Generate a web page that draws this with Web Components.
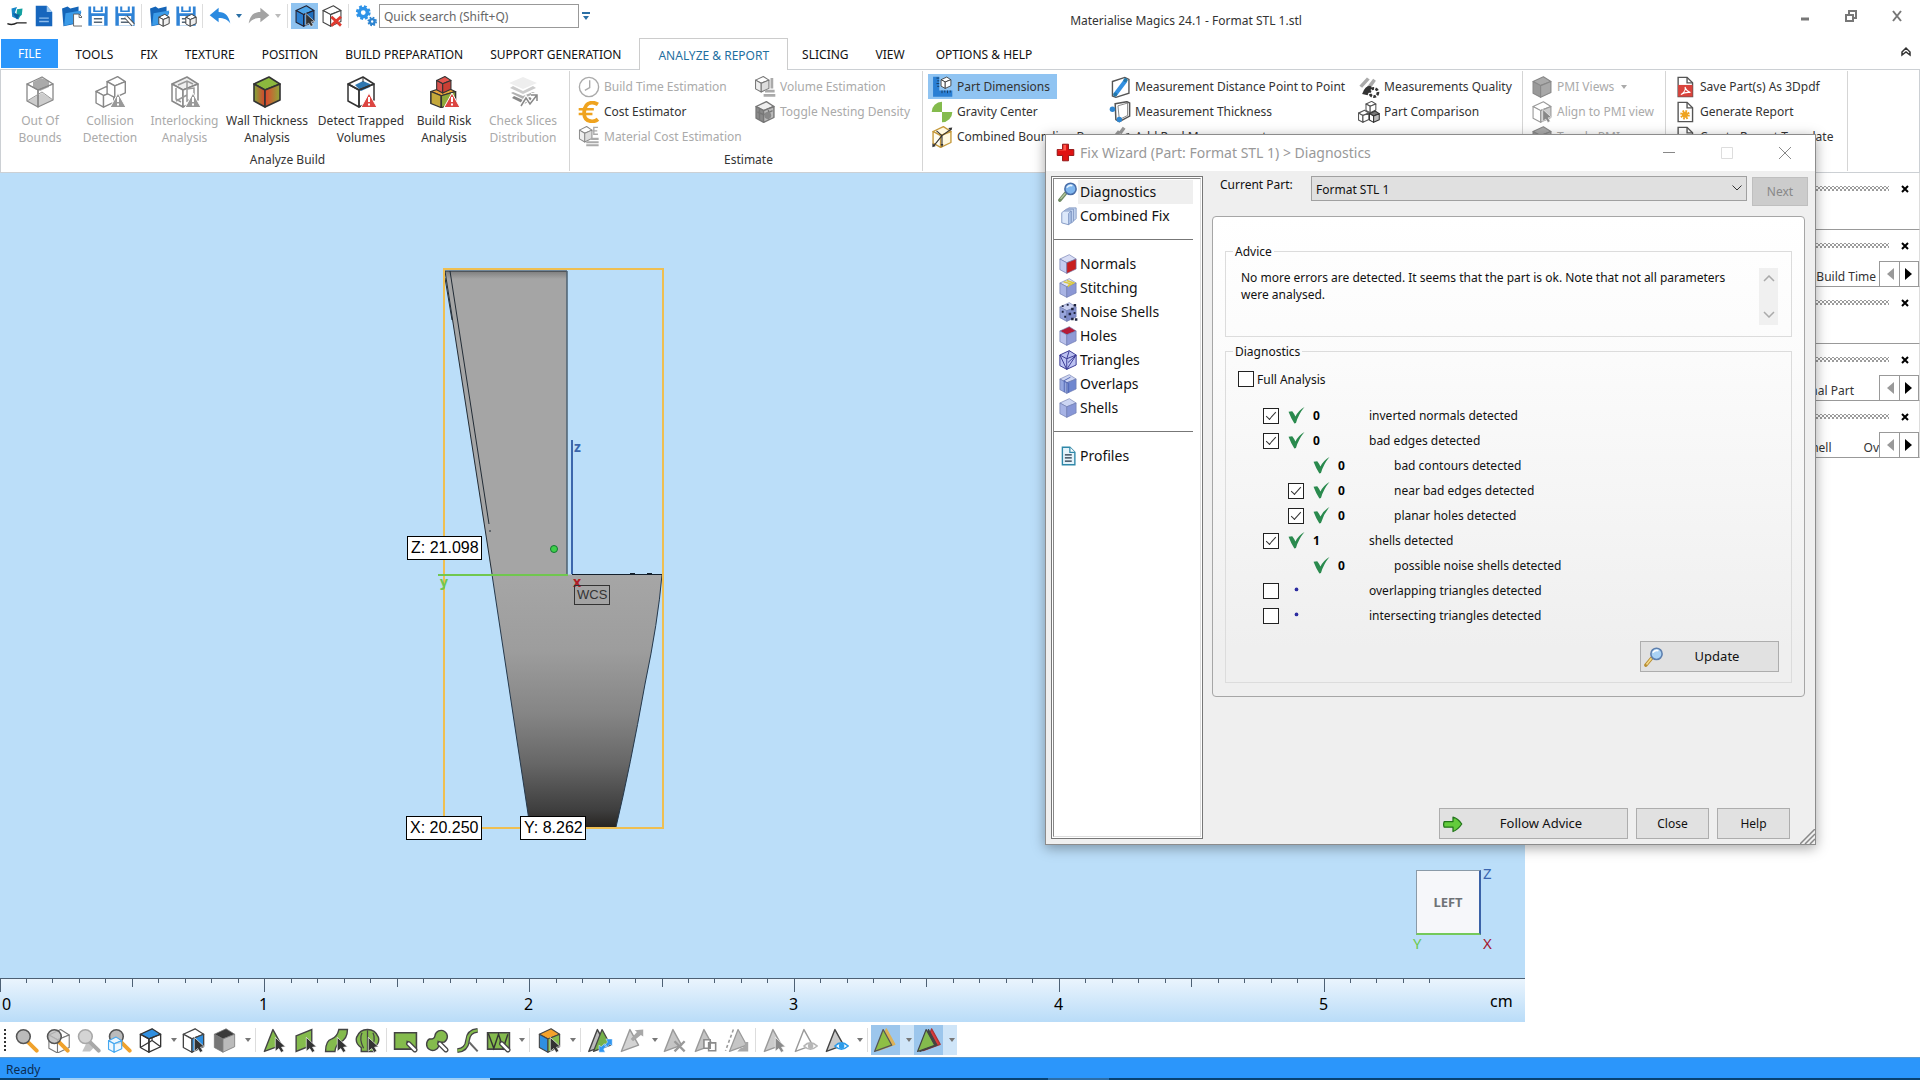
<!DOCTYPE html>
<html lang="en">
<head>
<meta charset="utf-8">
<title>Materialise Magics 24.1 - Format STL 1.stl</title>
<style>
  html, body { margin: 0; height: 100%; }
  body { font: 12px/17px "Noto Sans", "Open Sans", sans-serif; color: #222; background: #fff; overflow: hidden; }
</style>
</head>
<body>
<mg-app></mg-app>
<script>
/* ---------- icon drawing helpers, all on a 32-unit grid ---------- */
const cube = (t, l, r, s = '#444', w = 1.6, tf = '') =>
  `<g transform="${tf}" stroke="${s}" stroke-width="${w}" stroke-linejoin="round"><path fill="${t}" d="M18 1L3 8l11 6 15-6z"/><path fill="${l}" d="M3 8v17l11 6V14z"/><path fill="${r}" d="M14 14v17l15-7V8z"/></g>`;
const warn = c => `<path fill="${c}" stroke="#fff" d="M24 17l8 14.500H16z"/><path d="M24 21v5m0 1.500v2" stroke="#fff" stroke-width="2"/>`;
const cursor = (c = '#333') => `<path fill="${c}" stroke="#fff" stroke-width=".8" d="M17 12l13 12-5 .5 3 5-3.500 1.800-3-5-4.500 3.500z"/>`;
const pencil = (c = '#fff', e = '#444') => `<path d="M20 20l8 8" stroke="${e}" stroke-width="6.500" stroke-linecap="round"/><path d="M20 20l8 8" stroke="${c}" stroke-width="3.500" stroke-linecap="round"/><path d="M17 16l4 1-3 3z" fill="${e}"/>`;
const tri = (f, s = '#444', w = 1.800, tf = '') => `<path transform="${tf}" d="M14 2L3 30l22-8z" fill="${f}" stroke="${s}" stroke-width="${w}" stroke-linejoin="round"/>`;
const eye = (c) => `<path d="M14 23q8-8 17 0-9 8-17 0z" fill="#fff" stroke="${c}" stroke-width="2"/><circle cx="22.500" cy="23" r="3.500" fill="${c}"/>`;
const floppy = `<path fill="#2f83d6" d="M2 2h4v10h20V2h4v28H2z"/><path fill="#2f83d6" d="M9 2h3v6h8V2h3v8H9z"/><path fill="#fff" d="M7 16h18v14H7z"/><path stroke="#567" stroke-width="2" d="M10 20h12M10 25h12"/>`;
const folder = `<path fill="#1565b8" d="M3 5l8-3 4 3 12-3v7l4 1-6 17-20 4z"/><path fill="#3b9be8" d="M8 12l23-4-5 17-20 5z"/>`;
const page = (s = '#555') => `<path d="M6 2h13l8 8v20H6z" fill="#fff" stroke="${s}" stroke-width="2"/><path d="M19 2v8h8" fill="none" stroke="${s}" stroke-width="2"/>`;
const mag = (g, h, o = '#555') => `<path d="M18 18l11 11" stroke="${h}" stroke-width="5" stroke-linecap="round"/><circle cx="12" cy="11" r="8.800" fill="${g}" stroke="${o}" stroke-width="2"/>`;
const lilac = (t, l, r) => cube(t, l, r, '#6b78ad', 1);
const clay = '#888';
const arrow = c => `<path fill="${c}" d="M1 15L14 4v6c10 0 15 6 17 17-4-6-9-8-17-8v6z"/>`;
const stack = `<path fill="#eee" d="M16 1l14 6-14 6L2 7z"/><path fill="#ccc" d="M3 12l13 6 13-6-3-2-10 5-10-5z"/><path fill="#b0b0b0" d="M4 17l12 6 12-6-2-1-10 4-10-4z"/><path fill="#888" d="M5 22l12 6 9-4-3-3-7 3-9-4z"/>`;
const ICONS = {
  logo: `<path fill="#1787c9" d="M8 5l8-2-3 8 7 6-2 4-9-4z"/><path fill="#12a0a0" d="M16 6l8-1-1 9-6 6-2-6z"/><path fill="#0d5f9f" d="M10 12l6 9 4-7z"/><path d="M2 27q7 3 14-1h14" stroke="#222" stroke-width="2" fill="none"/>`,
  newdoc: `<path fill="#1766bd" d="M4 1h16l8 9v21H4z"/><path fill="#9cc9f2" d="M20 1l8 9h-8z"/><path stroke="#8fbdec" stroke-width="2" d="M9 19h14M9 24h14"/>`,
  open: folder + `<g transform="translate(16 12) scale(.62)">${page()}</g>`,
  save: floppy,
  saveas: floppy + `<path d="M17 17l11 12" stroke="#555" stroke-width="6"/><path d="M17 17l11 12" stroke="#fff" stroke-width="3"/>`,
  openpart: folder + cube('#fff', '#fff', '#eee', '#444', 2.500, 'translate(14 13) scale(.58)'),
  savepart: floppy + cube('#fff', '#fff', '#eee', '#444', 2.500, 'translate(14 13) scale(.58)'),
  undo: arrow('#2b8ae0'),
  redo: `<g transform="matrix(-1 0 0 1 32 0)">${arrow('#a3a3a3')}</g>`,
  selcube: cube('#4ea6ea', '#2b7fd0', '#1f6fbe', '#223', 1.600) + cursor(),
  delcube: cube('#fff', '#fff', '#fff') + `<path d="M15 17l14 13M29 17L15 30" stroke="#e03a2f" stroke-width="4"/>`,
  gears: `<circle cx="12" cy="11" r="6" fill="none" stroke="#2e93e8" stroke-width="5"/><circle cx="12" cy="11" r="9" fill="none" stroke="#2e93e8" stroke-width="3.500" stroke-dasharray="4 3.070"/><circle cx="25" cy="24" r="3.500" fill="none" stroke="#2e84d0" stroke-width="3.500"/><circle cx="25" cy="24" r="5.800" fill="none" stroke="#2e84d0" stroke-width="2.400" stroke-dasharray="2.500 2.060"/>`,
  bounds: `<path d="M9 6l8-4 8 3v6l-9 4-7-4z" fill="#aaa"/><path d="M3 25l15-8 11 7-15 7z" fill="#ccc"/>` + cube('none', 'none', 'none', '#888', 1.300) + `<path d="M3 25l15-9 11 8" fill="none" stroke="#999"/>`,
  collision: cube('#fff', '#fff', '#fff', clay, 2, 'translate(0 10) scale(.68)') + cube('#fff', '#fff', '#fff', clay, 2, 'translate(11 0) scale(.7)') + warn('#999'),
  interlock: cube('#eee', '#fff', '#fff', clay, 1.500) + `<path d="M18 5v10M7 12v11l5 3M18 13v12l7-3V12zM9 9l9-4 6 3M7 25l11-6" fill="none" stroke="#999" stroke-width="1.500"/>` + warn('#999'),
  wall: `<defs><linearGradient id="w"><stop offset="0" stop-color="#80a83a"/><stop offset="1" stop-color="#d8432c"/></linearGradient><linearGradient id="v"><stop offset="0" stop-color="#e0452e"/><stop offset="1" stop-color="#8fa83a"/></linearGradient></defs>` + cube('#8cb83e', 'url(#w)', 'url(#v)', '#333'),
  trapped: `<path d="M10 9l8-4 7 3v3l-9 4z" fill="#2f77b0"/>` + cube('none', 'none', 'none', '#333', 1.500) + `<path d="M18 1v5" stroke="#333"/>` + warn('#dc4541'),
  risk: cube('#e8a33c', '#c4a83b', '#90a93a', '#333', 1.600, 'translate(0 10) scale(.95 .7)') + cube('#e4554e', '#d8504c', '#cb3f34', '#333', 2, 'translate(7 0) scale(.55)') + warn('#dc4541'),
  slices: stack + `<path d="M14 30l5-8 4 6 7-9m-6 0h6v6" fill="none" stroke="#fff" stroke-width="4"/><path d="M14 30l5-8 4 6 7-9m-6 0h6v6" fill="none" stroke="#888" stroke-width="1.500"/>`,
  clock: `<circle cx="16" cy="16" r="14" fill="#fff" stroke="#aaa" stroke-width="2"/><path d="M17 6v11l-7 4" fill="none" stroke="#aaa" stroke-width="2"/>`,
  euro: `<path d="M29 5Q24 2 20 2.500 10 3 9 16t11 13.500q5 .5 9-3" fill="none" stroke="#efa31f" stroke-width="5.500"/><path d="M1 12h22M1 19h20" stroke="#efa31f" stroke-width="3.500"/>`,
  matcost: cube('#fff', '#eee', '#ddd', '#888', 2, 'scale(.7 .75)') + `<path fill="#aaa" d="M12 22h18v3H12zM12 26.500h18v3H12zM19 17h11v3.500H19z"/><path d="M29 2h-6v10h6M21 7h7" stroke="#aaa" stroke-width="2" fill="none"/>`,
  volume: cube('#fff', '#eee', '#ddd', '#777', 2, 'scale(.75)') + `<path fill="#aaa" d="M16 20h14v4H16zM14 26h17v4H14zM24 3h4v15h-4z"/>`,
  nest: cube('#eee', '#8a8a8a', '#bbb', '#777', 2) + `<path d="M5 16l9 4 13-6M8 12v15M21 13v14" stroke="#777" stroke-width="2" fill="none"/><circle cx="20" cy="21" r="5" fill="#888"/>`,
  dims: `<path fill="#2a7fd4" d="M3 1h9v20h19v9H3z"/><path d="M12 3h-4M12 7H9M12 11H8M12 15H9M16 21v4M20 21v3M24 21v4M28 21v3" stroke="#123" stroke-width="1"/>` + cube('#fff', '#fff', '#fff', '#333', 2.200, 'translate(13 1) scale(.55)'),
  gravity: `<path fill="#84bb4d" d="M16 1v15H1A15 15 0 0116 1zM16 31V16h15a15 15 0 01-15 15z"/>` ,
  bbox: cube('#fff8e0', '#fffdf2', '#fff8e0', '#c5993c', 2) + `<path d="M4 29L16 14m0 0L8 7m8 7l14-10M16 14v14" stroke="#333" stroke-width="1.600" fill="none"/><path fill="#333" d="M2 31v-6l5 4zM31 2l-6 1 4 4zM14 26h4l-2 5z"/>`,
  dist: `<path d="M5 8l18-6 6 3v20L10 31l-5-2z" fill="#fff" stroke="#555" stroke-width="2"/><path d="M9 27L24 7" stroke="#3390e0" stroke-width="6"/><circle cx="9" cy="27" r="3" fill="#27a"/><circle cx="24" cy="6" r="3" fill="#27a"/>`,
  thick: `<path d="M9 4l17-3 4 2v19L15 30l-5-3z" fill="#fff" stroke="#555" stroke-width="2.200"/><path d="M13 7l14-4v18l-12 6z" fill="none" stroke="#555"/><circle cx="5" cy="12" r="4" fill="#2f86d0"/><circle cx="15" cy="27" r="4" fill="#2f86d0"/>`,
  measure: `<path fill="#999" d="M2 20L13 6l4 3-9 14zM14 9l6-8 4 3-6 8z"/><path fill="#444" d="M17 20q4-10 12-10l2 4q-7 0-8 9z"/>`,
  quality: `<path fill="#aaa" d="M2 14L13 2l4 3L6 17zM12 17L22 4l4 3-9 13z"/><path fill="#333" d="M6 26q4-12 12-12l6 9q-8-3-10 5z"/><circle cx="23" cy="24" r="6" fill="#fff" stroke="#333" stroke-width="4" stroke-dasharray="4 2"/>`,
  compare: cube('#fff', '#fff', '#fff', '#555', 2.800, 'translate(10 0) scale(.55)') + cube('#fff', '#fff', '#fff', '#555', 2.800, 'translate(-1 13) scale(.58)') + cube('#777', '#fff', '#bbb', '#333', 2.800, 'translate(15 14) scale(.55)'),
  pmi: cube('#aaa', '#999', '#a8a8a8', '#888'),
  align: cube('#fff', '#fff', '#ccc', '#999') + cursor('#888'),
  pdf: page() + `<path fill="#d9433c" d="M6 13h21v17H6z"/><path d="M10 27q8-5 6-11 2 6 8 8-8-1-14 3z" fill="none" stroke="#fff" stroke-width="1.500"/>`,
  report: page() + `<circle cx="16" cy="20" r="4.500" fill="#efa31f"/><circle cx="16" cy="20" r="5.500" fill="none" stroke="#efa31f" stroke-width="3" stroke-dasharray="2.500 1.800"/>`,
  template: page() + `<path stroke="#777" stroke-width="2" d="M10 15h12M10 20h12"/>`,
  plus: `<path fill="#e01212" stroke="#8a0d0d" stroke-width="1.500" d="M11 2h10v9h9v10h-9v9H11v-9H2V11h9z"/><path fill="#ff5a4e" d="M12.500 3.500H17v9H4v-1h8.500z"/>`,
  lens: `<path d="M3 29l10-12" stroke="#6f8a62" stroke-width="5.500" stroke-linecap="round"/><path d="M4 27l8-9" stroke="#b9c9a4" stroke-width="2"/><circle cx="20" cy="11" r="9" fill="#7fb6ee" stroke="#4a6ea8" stroke-width="2.500"/><path d="M14 9q4-5 9-3" stroke="#e8f4ff" stroke-width="2.500" fill="none"/>`,
  lensgold: `<path d="M3 29l10-12" stroke="#b98f33" stroke-width="5.500" stroke-linecap="round"/><path d="M4 28l8-10" stroke="#f5d98a" stroke-width="2.500"/><circle cx="20" cy="11" r="9" fill="#a9d2f5" stroke="#5d7fae" stroke-width="2.500"/><path d="M14 9q4-5 9-3" stroke="#fff" stroke-width="2.500" fill="none"/>`,
  combined: `<g stroke="#7c92bf" stroke-width="1.400"><path fill="#c9d9f2" d="M14 6l3-3h12v17l-3 3H14z"/><path fill="#c0d2ef" d="M10 8l3-3h12v19l-3 3H10z"/><path fill="#dce8fa" d="M6 11l3-3h12v18l-4 4-11-3z"/><path fill="#b3c8ec" d="M17 30V12l4-4v18z"/></g>`,
  normals: lilac('#d8ddf5', '#c5ccf0', '#c81e1e'),
  stitching: lilac('#dde2f5', '#a9b4e4', '#8b97d4') + `<path d="M9 6l10 3-3 5M14 4l11 4-9 5" fill="none" stroke="#d9c842" stroke-width="2.500"/>`,
  noise: lilac('#c8cff0', '#98a5dc', '#7f8cca') + `<path fill="#1e2440" d="M6 5h3v3H6zM14 3h3v3h-3zM25 3h4v4h-4zM21 9h4v4h-4zM6 14h3v3H6zM10 22h3v3h-3zM17 17h4v4h-4zM25 16h3v3h-3zM21 25h4v4h-4zM27 26h4v4h-4z"/>`,
  holes: lilac('#b51c38', '#b9c1ea', '#8f9ad6'),
  triangles: `<path fill="#bcc2f2" stroke="#3e3e96" stroke-width="1.600" stroke-linejoin="round" d="M18 1L3 8v17l11 6 15-7V8z"/><path d="M3 8l11 23L29 8 14 14 3 8m11 6v17M14 14L18 1m11 7L16 20" fill="none" stroke="#3e3e96" stroke-width="1.600"/>`,
  overlaps: lilac('#cfd6f2', '#95a7e0', '#6e86cf') + `<path d="M10 12v17M20 5L9 11l8 4v15" fill="none" stroke="#5066b4" stroke-width="1.500"/>`,
  shells: lilac('#ccd5f3', '#a7b3e5', '#8796d6'),
  profiles: `<path d="M7 2h12l8 8v20H7z" fill="#e4f3fb" stroke="#2e87a8" stroke-width="2.200"/><path d="M19 2v8h8" fill="#fff" stroke="#2e87a8" stroke-width="2"/><path d="M11 14h11M11 19h11M11 24h11" stroke="#234" stroke-width="2"/>`,
  tick: `<path fill="#2a8a4e" d="M1 9l7-1q4 5 6 10Q19 7 31 0 20 13 15 30l-3 1Q5 20 1 9z"/>`,
  dot: `<circle cx="16" cy="14" r="3.500" fill="#2c2ca0"/>`,
  go: `<path d="M2 12h14V5q8 2 14 11-6 9-14 12v-7H2q-2-4 0-9z" fill="#63cc3c" stroke="#22741a" stroke-width="2" stroke-linejoin="round"/>`,
  zoom: mag('#bbb', '#f0a22c'),
  zoomcube: cube('#fff', '#fff', '#fff', '#777', 1.400, 'translate(2 1)') + mag('#bbbc', '#f0a22c'),
  zoomgray: `<path d="M8 30h10l6-6-8-10z" fill="#c4c4c4"/>` + mag('#d4d4d4', '#a8a8a8', '#a8a8a8'),
  zoomsel: mag('#bbb', '#f0a22c') + cube('#eaf6ff', '#eaf6ffcc', '#eaf6ffcc', '#45a8f0', 2.200, 'translate(0 11) scale(.65)'),
  topcube: cube('#2f8fe0', 'none', 'none', '#333', 1.700) + `<path d="M3 25l15-9 11 8M18 12v4" fill="none" stroke="#333" stroke-width="1.500"/>`,
  facecube: cube('#fff', '#fff', '#2f8fe0', '#444', 1.700) + cursor(),
  solid: cube('#3b3b3b', '#777', '#bbb', '#777', 1),
  pick: tri('#84bb4d') + cursor(),
  quad: `<path d="M4 10l20-8v20L4 30z" fill="#84bb4d" stroke="#444" stroke-width="1.800"/>` + cursor(),
  surf: `<path d="M2 30q0-14 8-16 7-3 9-12h11q0 12-9 16-6 3-7 12z" fill="#84bb4d" stroke="#444" stroke-width="1.800"/>` + cursor(),
  shell: `<path d="M8 30V25Q0 20 2 12 6 2 16 2t14 10q2 8-6 13v5z" fill="#84bb4d" stroke="#444" stroke-width="1.800"/><path d="M16 3v26M9 6q-4 8 2 20M23 6q4 8-2 20" fill="none" stroke="#444" stroke-width="1.600"/>` + cursor(),
  rectpen: `<path d="M2 6h28v21H2z" fill="#84bb4d" stroke="#444" stroke-width="2"/>` + pencil(),
  blob: `<path d="M14 10a8 8 0 1112 8q-7 0-7 5a8 8 0 11-12-9q6 1 7-4z" fill="#84bb4d" stroke="#444" stroke-width="1.800"/>` + pencil(),
  spline: `<path d="M3 29q12-1 13-13T29 3" fill="none" stroke="#444" stroke-width="6"/><path d="M3 29q12-1 13-13T29 3" fill="none" stroke="#84bb4d" stroke-width="3"/><path d="M17 17l12 13" stroke="#666" stroke-width="2.500"/>`,
  zig: `<path d="M2 6h28v21H2z" fill="#84bb4d" stroke="#444" stroke-width="2"/><path d="M3 7l7 19 6-18 6 18 6-18" fill="none" stroke="#333" stroke-width="1.800"/>` + pencil(),
  colour: cube('#f4a22c', '#2f8fe0', '#84bb4d', '#444', 1.400) + cursor(),
  flip: tri('#bbb', '#444', 1.800, 'translate(-2 0)') + tri('#74b04a', '#444', 1.600, 'translate(4 0)') + `<path fill="#2f96f0" stroke="#fff" stroke-width=".6" d="M31 14v9l-3-2-4 4-3-3 4-4-2-4zM14 31v-9l3 2 4-4 3 3-4 4 2 4z"/>`,
  ungroup: tri('#ccc', '#888') + `<path fill="#999" d="M31 2v9l-3-2-10 8-3-3 8-9-3-2z"/>`,
  tridel: tri('#bbb', '#888') + `<path d="M16 17l13 13M29 17L16 30" stroke="#888" stroke-width="3"/>`,
  tricopy: tri('#bbb', '#888') + `<path d="M14 15h8v11h-8zM20 19h9v10h-9z" fill="#fff" stroke="#777" stroke-width="2"/>`,
  tridash: `<path d="M12 2L2 29" stroke="#888" stroke-width="2" stroke-dasharray="4 3"/>` + tri('#bbb', '#888', 1.600, 'translate(4 0)') + `<path fill="#999" d="M31 18v12H17l4-4q6 0 6-8z"/>`,
  trigray: tri('#c4c4c4', '#888') + cursor('#777'),
  trieye: tri('#fff', '#888') + eye('#aaa'),
  triview: tri('#c9c9c9', '#444') + eye('#2b9bea'),
  trigold: tri('#dcb258', '#dcb258', 1.500, 'translate(3 -1)') + tri('#8ebf45', '#555', 1.600, 'translate(-1 0)'),
  trired: tri('#d93b3b', '#a33', 1.500, 'translate(6 -1)') + tri('#444', '#444', 1.500, 'translate(2 0)') + tri('#84bb4d', '#444', 1.500, 'translate(-1 0)'),
};

/* ---------- component helper ---------- */
const reset = `*{box-sizing:border-box}button,select,input{font:inherit;color:inherit;margin:0}button{border:0;background:none;padding:0}`;
function component(name, css, html) {
  customElements.define(name, class extends HTMLElement {
    connectedCallback() {
      if (this.shadowRoot) return;
      const root = this.attachShadow({ mode: 'open' });
      const markup = typeof html === 'function' ? html(k => this.getAttribute(k) || '', this) : html;
      root.innerHTML = `<style>${reset}${css}</style>${markup}`;
    }
  });
}

component('mg-icon', `:host{display:block;flex:none;width:var(--size,22px);height:var(--size,22px)}svg{display:block;width:100%;height:100%}`,
  a => `<svg viewBox="0 0 32 32" fill="none" aria-hidden="true">${ICONS[a('name')]}</svg>`);

component('mg-caret', `:host{display:flex;align-items:center;justify-content:center;width:12px;align-self:stretch}i{border:3px solid transparent;border-top:4px solid var(--caret,#777);border-bottom:0}`, `<i></i>`);

/* ---------- title bar ---------- */
component('mg-quick', `:host{display:block}button{display:grid;place-items:center;width:27px;height:26px}:host([on]) button{background:#8fc3f0}`,
  a => `<button aria-label="${a('label')}"><mg-icon name="${a('icon')}"></mg-icon></button>`);
component('mg-titlebar', `
  :host{display:flex;align-items:center;height:38px;padding:0 0 6px 3px}
  .sep{width:1px;height:24px;background:#ddd;margin:0 3px}
  input{width:200px;height:24px;border:1px solid #999;padding:0 4px;background:#fff;outline:0}
  input::placeholder{color:#666;opacity:1}
  .more{margin-left:3px;width:8px;border-top:2px solid #2a6fa5;padding-top:2px;display:flex;justify-content:center}
  .more::after{content:"";border:3px solid transparent;border-top:4px solid #2a6fa5;border-bottom:0}
  h1{flex:1;margin:0;padding-top:9px;font-size:12px;font-weight:400;text-align:center;color:#333}
  .win{display:flex}.win button{width:46px;height:30px;display:grid;place-items:center}
  svg{stroke:#777;fill:none;stroke-width:2}`,
  `<mg-quick icon="logo" label="Magics"></mg-quick><mg-quick icon="newdoc" label="New"></mg-quick><mg-quick icon="open" label="Open"></mg-quick><mg-quick icon="save" label="Save"></mg-quick><mg-quick icon="saveas" label="Save as"></mg-quick>
  <span class="sep"></span><mg-quick icon="openpart" label="Load part"></mg-quick><mg-quick icon="savepart" label="Save part"></mg-quick>
  <span class="sep"></span><mg-quick icon="undo" label="Undo"></mg-quick><mg-caret style="--caret:#2a6fa5"></mg-caret><mg-quick icon="redo" label="Redo"></mg-quick><mg-caret style="--caret:#bbb"></mg-caret>
  <span class="sep"></span><mg-quick on icon="selcube" label="Select parts"></mg-quick><mg-quick icon="delcube" label="Unload"></mg-quick>
  <span class="sep"></span><mg-quick icon="gears" label="Settings"></mg-quick>
  <input type="text" placeholder="Quick search (Shift+Q)" aria-label="Quick search"><span class="more"></span>
  <h1>Materialise Magics 24.1 - Format STL 1.stl</h1>
  <div class="win">
    <button aria-label="Minimize"><svg width="10" height="12"><path d="M1 9h8" stroke-width="3"/></svg></button>
    <button aria-label="Restore"><svg width="12" height="12"><path d="M1 5h7v6H1zM4 4V1h7v7H8"/></svg></button>
    <button aria-label="Close"><svg width="12" height="12"><path d="M2 1l8 10M10 1L2 11"/></svg></button>
  </div>`);

/* ---------- ribbon ---------- */
component('mg-tab', `
  :host{display:block}
  button{height:31px;padding:2px 13px 0;color:#111;line-height:29px;white-space:nowrap}
  :host([kind=file]) button{background:#2b96fb;color:#fff;padding:0 17px;margin:1px 3px 0 1px;height:29px}
  :host([kind=active]) button{border:1px solid #ccc;border-bottom:0;background:#fff;color:#1f6f9f;padding:1px 18px 0;position:relative;height:32px;margin:0 0 -1px 4px}
  :host([kind=wide]) button{padding-right:17px}`,
  `<button role="tab"><slot></slot></button>`);
component('mg-tabs', `
  :host{display:flex;height:31px;align-items:flex-start}
  nav{display:flex;flex:1;gap:1px}
  .fold{margin:7px 7px 0 0;width:14px;height:14px}svg{display:block;fill:none;stroke:#333;stroke-width:1.500}`,
  `<nav role="tablist"><mg-tab kind="file">FILE</mg-tab><mg-tab>TOOLS</mg-tab><mg-tab>FIX</mg-tab><mg-tab>TEXTURE</mg-tab><mg-tab>POSITION</mg-tab><mg-tab>BUILD PREPARATION</mg-tab><mg-tab>SUPPORT GENERATION</mg-tab><mg-tab kind="active">ANALYZE &amp; REPORT</mg-tab><mg-tab>SLICING</mg-tab><mg-tab kind="wide">VIEW</mg-tab><mg-tab>OPTIONS &amp; HELP</mg-tab></nav>
  <button class="fold" aria-label="Collapse ribbon"><svg width="14" height="14"><path d="M3 7l4-4 4 4v3L7 7l-4 3z"/></svg></button>`);
component('mg-big', `
  :host{display:block;width:var(--w,70px)}
  button{display:flex;flex-direction:column;align-items:center;gap:4px;width:100%;padding-top:2px;line-height:17px;color:#333;white-space:nowrap;--size:32px}
  :host([off]) button{color:#aaa}`,
  a => `<button><mg-icon name="${a('icon')}"></mg-icon><span><slot></slot></span></button>`);
component('mg-cmd', `
  :host{display:block}
  button{display:flex;align-items:center;gap:4px;height:25px;padding:0 7px 0 3px;color:#333;white-space:nowrap}
  :host([off]) button{color:#aaa}:host([on]) button{background:#90c4f2}`,
  a => `<button><mg-icon name="${a('icon')}"></mg-icon><slot></slot></button>`);
component('mg-group', `
  :host{display:flex;flex-direction:column;border-right:1px solid #d5d5d5;padding:3px 0 0 5px}
  div{display:flex;height:75px}
  footer{text-align:center;line-height:20px;padding-top:1px;height:21px;color:#333}
  ::slotted(section){width:var(--w)}`,
  a => `<div><slot></slot></div><footer>${a('label')}</footer>`);
component('mg-ribbon', `:host{display:flex;height:104px;border:1px solid #ccd0d4;padding:1px 0}`, `
  <mg-group label="Analyze Build">
    <mg-big off icon="bounds" style="--w:68px">Out Of<br>Bounds</mg-big><mg-big off icon="collision" style="--w:72px">Collision<br>Detection</mg-big><mg-big off icon="interlock" style="--w:77px">Interlocking<br>Analysis</mg-big><mg-big icon="wall" style="--w:88px">Wall Thickness<br>Analysis</mg-big><mg-big icon="trapped" style="--w:100px">Detect Trapped<br>Volumes</mg-big><mg-big icon="risk" style="--w:66px">Build Risk<br>Analysis</mg-big><mg-big off icon="slices" style="--w:92px">Check Slices<br>Distribution</mg-big>
  </mg-group>
  <mg-group label="Estimate">
    <section style="--w:176px"><mg-cmd off icon="clock">Build Time Estimation</mg-cmd><mg-cmd icon="euro">Cost Estimator</mg-cmd><mg-cmd off icon="matcost">Material Cost Estimation</mg-cmd></section>
    <section style="--w:171px"><mg-cmd off icon="volume">Volume Estimation</mg-cmd><mg-cmd off icon="nest">Toggle Nesting Density</mg-cmd></section>
  </mg-group>
  <mg-group label="Measure">
    <section style="--w:178px"><mg-cmd on icon="dims">Part Dimensions</mg-cmd><mg-cmd icon="gravity">Gravity Center</mg-cmd><mg-cmd icon="bbox">Combined Bounding Box</mg-cmd></section>
    <section style="--w:249px"><mg-cmd icon="dist">Measurement Distance Point to Point</mg-cmd><mg-cmd icon="thick">Measurement Thickness</mg-cmd><mg-cmd icon="measure">Add Real Measurement</mg-cmd></section>
    <section style="--w:167px"><mg-cmd icon="quality">Measurements Quality</mg-cmd><mg-cmd icon="compare">Part Comparison</mg-cmd></section>
  </mg-group>
  <mg-group label="PMI">
    <section style="--w:137px"><mg-cmd off icon="pmi">PMI Views <mg-caret style="--caret:#aaa"></mg-caret></mg-cmd><mg-cmd off icon="align">Align to PMI view</mg-cmd><mg-cmd off icon="pmi">Toggle PMI</mg-cmd></section>
  </mg-group>
  <mg-group label="Report">
    <section style="--w:176px"><mg-cmd icon="pdf">Save Part(s) As 3Dpdf</mg-cmd><mg-cmd icon="report">Generate Report</mg-cmd><mg-cmd icon="template">Create Report Template</mg-cmd></section>
  </mg-group>`);

/* ---------- viewport ---------- */
component('mg-tag', `:host{position:absolute;border:1px solid #000;background:#fff;color:#000;font:16px/22px "Liberation Sans",sans-serif;padding:0 2px 0 3px;white-space:nowrap}:host([plain]){background:none;font-size:13px;line-height:18px;padding:0 2px;color:#333;border-color:#333}`, `<slot></slot>`);
component('mg-view-cube', `
  :host{position:absolute;width:65px;height:65px}
  button{width:100%;height:100%;border:1px solid #8a9aa8;border-right:2px solid #3a62a8;border-bottom:2px solid #74c95a;background:#f6f7fa;color:#6e7276;font-weight:700;font-size:13px}
  span{position:absolute;font-size:15px;line-height:17px}`,
  `<button>LEFT</button><span style="left:67px;top:-5px;color:#3a66b0">Z</span><span style="left:-3px;top:65px;color:#6cc951">Y</span><span style="left:67px;top:65px;color:#a3162f">X</span>`);
component('mg-ruler', `:host{display:block;height:44px;border-top:1px solid #4d6074;background:linear-gradient(#eaf4fd,#b9dcf8)}svg{display:block;width:100%;height:100%}line{stroke:#4d6074}text{font:16px "Noto Sans",sans-serif;fill:#000}`,
  () => {
    const step = 26.480;
    let s = '';
    for (let i = 0; i <= 54; i++) {
      const x = Math.floor(i * step) + .5, h = i % 10 === 0 ? 13 : i % 5 === 0 ? 8 : 4;
      s += `<line x1="${x}" x2="${x}" y1="0" y2="${h}"/>`;
      if (i % 10 === 0) s += i ? `<text x="${x - 1}" y="31" text-anchor="middle">${i / 10}</text>` : `<text x="2" y="31">0</text>`;
    }
    return `<svg>${s}<text x="1490" y="28">cm</text></svg>`;
  });
component('mg-viewport', `
  :host{display:flex;flex-direction:column;flex:1;min-width:0}
  .scene{position:relative;flex:1;background:#bbdef9}
  .part{position:absolute;left:400px;top:77px}
  .part text{font:700 14px "Noto Sans",sans-serif}`,
  `<div class="scene">
    <svg class="part" width="300" height="600" viewBox="400 250 300 600">
      <defs><linearGradient id="g" gradientUnits="userSpaceOnUse" x1="0" x2="0" y1="574" y2="828"><stop offset="0" stop-color="#a6a6a6"/><stop offset=".3" stop-color="#9d9d9d"/><stop offset=".55" stop-color="#858585"/><stop offset=".75" stop-color="#666"/><stop offset=".93" stop-color="#3e3e3e"/><stop offset="1" stop-color="#262320"/></linearGradient>
      <linearGradient id="t" gradientUnits="userSpaceOnUse" x1="0" x2="0" y1="271" y2="279"><stop offset="0" stop-color="#7d7d7d"/><stop offset="1" stop-color="#a5a5a5"/></linearGradient></defs>
      <path fill="url(#t)" d="M445 271H567V575H492z"/>
      <path fill="url(#g)" d="M492 574.500H662Q658 622 645 684 630 768 616 827H530z"/>
      <path fill="none" stroke="#24384c" d="M662 574.500Q658 622 645 684 630 768 616 827M530 827L492 574.500"/>
      <path fill="none" stroke="#222c36" d="M492 574L445 271H567M450 271L489 524M445 278l7 42M490 530v2"/>
      <path stroke="#4d6070" stroke-width="1.500" d="M567 271v303"/>
      <path fill="none" stroke="#efbf52" stroke-width="2" d="M444 269H663V828H444z"/>
      <path stroke="#14202c" d="M572 574.500h90M630 573.500h5M647 573.500h5"/>
      <path stroke="#70c74f" stroke-width="2" d="M438 575h130"/>
      <path stroke="#3c66ac" stroke-width="2" d="M572 440v134"/>
      <circle cx="554" cy="549" r="3.500" fill="#3fcf4a" stroke="#173"/>
      <text x="574" y="452" fill="#3c66ac">z</text><text x="440" y="587" fill="#70c74f">y</text><text x="573" y="587" fill="#b01c24">x</text>
    </svg>
    <mg-tag style="left:407px;top:363px">Z: 21.098</mg-tag><mg-tag style="left:406px;top:643px">X: 20.250</mg-tag><mg-tag style="left:520px;top:643px">Y: 8.262</mg-tag>
    <mg-tag plain style="left:574px;top:412px">WCS</mg-tag>
    <mg-view-cube style="right:44px;bottom:43px"></mg-view-cube>
  </div><mg-ruler></mg-ruler>`);

/* ---------- docked panels ---------- */
component('mg-dock', `
  :host{display:flex;flex-direction:column;height:57px;border-bottom:1px solid #999;border-right:1px solid #ddd}
  header{display:flex;align-items:center;height:31px;padding:0 8px 0 4px;gap:10px}
  header i{flex:1;height:5px;background:radial-gradient(circle,#777 0 .6px,transparent 1px) 0 0/4px 4px,radial-gradient(circle,#777 0 .6px,transparent 1px) 2px 2px/4px 4px}
  header button{width:12px;height:12px;display:grid;place-items:center}
  .tabs{display:flex;flex:1;justify-content:flex-end;min-width:0;color:#333}
  .labels{display:flex;align-items:center;gap:32px;white-space:nowrap;padding-top:5px}
  .nav{display:flex;border:1px solid #999;border-bottom:0}.nav button{width:19px;display:grid;place-items:center}.nav button+button{border-left:1px solid #999}`,
  a => `<header><i></i><button aria-label="Close panel"><svg width="8" height="8"><path d="M1 1l6 6M7 1L1 7" stroke="#000" stroke-width="2"/></svg></button></header>` +
    (a('tabs') === '' ? '' : `<div class="tabs"><div class="labels"><slot></slot></div><div class="nav"><button aria-label="Previous tab"><svg width="8" height="12"><path d="M8 0v12L1 6z" fill="#999"/></svg></button><button aria-label="Next tab"><svg width="8" height="12"><path d="M0 0v12l7-6z" fill="#000"/></svg></button></div></div>`));
component('mg-side', `:host{display:block;width:395px;background:#fff}.near{padding-right:3px}.gap{padding-right:25px}`,
  `<mg-dock></mg-dock><mg-dock tabs="1"><span class="near">Build Time</span></mg-dock><mg-dock></mg-dock><mg-dock tabs="1"><span class="gap">Original Part</span></mg-dock><mg-dock tabs="1"><span>Shell</span><span>Ov</span></mg-dock>`);

/* ---------- bottom toolbar ---------- */
component('mg-tool', `:host{display:flex;height:30px}button{width:31px;display:grid;place-items:center;--size:25px}mg-caret{box-sizing:border-box;padding-left:3px}:host([off]) button{opacity:.85}:host([on]){background:#cfe5f8}:host([on]) button{width:29px;background:#9cc6ec}:host([on]) mg-caret{width:14px}`,
  (a, el) => `<button aria-label="${a('icon')}"><mg-icon name="${a('icon')}"></mg-icon></button>${el.hasAttribute('menu') ? `<mg-caret></mg-caret>` : ''}`);
component('mg-toolbar', `:host{display:flex;align-items:center;height:35px;background:#fff;padding-top:1px}hr{width:1px;height:24px;border:0;background:#ddd;margin:0 3px}hr.far{margin-right:4px}i{width:2px;height:22px;margin:0 5px 0 4px;background:repeating-linear-gradient(#333 0 2px,transparent 2px 4px)}`,
  `<i></i>` + [['zoom'], ['zoomcube'], ['zoomgray'], ['zoomsel'], ['topcube', 'menu'], ['facecube'], ['solid', 'menu'], 0, ['pick'], ['quad'], ['surf'], ['shell'], 0, ['rectpen'], ['blob'], ['spline'], ['zig', 'menu'], 1, ['colour', 'menu'], 1, ['flip'], ['ungroup', 'off menu'], ['tridel', 'off'], ['tricopy', 'off'], ['tridash', 'off'], 0, ['trigray', 'off'], ['trieye', 'off'], ['triview', 'menu'], 0, ['trigold', 'on menu'], ['trired', 'on menu']]
    .map(t => t === 0 ? `<hr>` : t === 1 ? `<hr class="far">` : `<mg-tool icon="${t[0]}" ${t[1] || ''}></mg-tool>`).join(''));
component('mg-status', `:host{display:block;height:23px;background:#2b96fb;border-top:1px solid #5a9ad0;color:#0c2c50}div{height:20px;line-height:23px;padding-left:6px}p{margin:0;height:2px;background:linear-gradient(90deg,#084272 60px,#9fcff5 60px 490px,#084272 490px 1048px,#2c6ea8 1048px 1109px,#084272 1109px)}`, `<div>Ready</div><p></p>`);

/* ---------- Fix Wizard dialog ---------- */
component('mg-nav-item', `
  :host{display:block;height:24px;padding-right:7px}
  button{display:flex;align-items:center;width:100%;height:24px;padding-left:4px;font-size:14px;color:#111;--size:20px}
  span{flex:1;text-align:left;padding-left:2px;line-height:24px}:host([on]) span{background:#efefef}`,
  a => `<button><mg-icon name="${a('icon')}"></mg-icon><span><slot></slot></span></button>`);
const box = `input[type=checkbox]{appearance:none;width:16px;height:16px;border:1px solid #222;background:#fff;display:grid;place-items:center;flex:none}
  input:checked::before{content:"";width:9px;height:4px;border:solid #333;border-width:0 0 1px 1px;transform:translateY(-1px) rotate(-48deg)}`;
component('mg-check', `:host{display:grid;grid-template-columns:25px 25px 56px auto;align-items:center;height:25px;color:#111;--size:17px}:host([sub]){margin-left:25px}b{color:#000}${box}`,
  (a, el) => {
    const id = 'c', has = !el.hasAttribute('bare'), on = el.hasAttribute('checked');
    return `${has ? `<input type="checkbox" id="${id}" ${on ? 'checked' : ''}>` : '<span></span>'}<mg-icon name="${a('count') ? 'tick' : 'dot'}"></mg-icon><b>${a('count')}</b>${has ? `<label for="${id}"><slot></slot></label>` : `<span><slot></slot></span>`}`;
  });
component('mg-button', `
  :host{display:block}
  button{display:flex;align-items:center;width:100%;height:31px;border:1px solid #adadad;background:#e1e1e1;color:#111;--size:20px;padding:0 3px}
  span{flex:1;text-align:center}
  :host([icon]) button{font-size:13px;padding:0 8px 0 3px}
  :host([disabled]) button{background:#ccc;border-color:#bfbfbf;color:#888;height:29px}`,
  (a, el) => `<button ${el.hasAttribute('disabled') ? 'disabled' : ''}>${a('icon') ? `<mg-icon name="${a('icon')}"></mg-icon>` : ''}<span><slot></slot></span></button>`);
component('mg-fix-wizard', `
  :host{position:absolute;left:1045px;top:134px;width:771px;height:711px;display:flex;flex-direction:column;background:#efefef;border:1px solid #8c8c8c;box-shadow:0 3px 12px rgba(0,0,0,.35)}
  header{display:flex;align-items:center;height:36px;background:#fff;padding:0 1px 1px 10px;--size:19px}
  h2{flex:1;margin:0 0 0 5px;font-size:14px;line-height:20px;font-weight:400;color:#999}
  header button{width:58px;height:30px;display:grid;place-items:center}
  header svg{fill:none;stroke:#888;stroke-width:1}
  .body{flex:1;display:flex;padding:5px 7px 5px 5px;gap:9px}
  nav{width:152px;border:1px solid #777;outline:1px solid #fff;outline-offset:-2px;padding:1px}
  .list{height:100%;background:#fff;border:1px solid #888;border-right-color:#ddd;border-bottom-color:#ddd;padding-top:1px}
  hr{border:0;height:24px;margin:0 7px 0 0;background:linear-gradient(#777,#777) 0 11px/100% 1px no-repeat}
  main{flex:1;display:flex;flex-direction:column;min-width:0;color:#111}
  .top{display:flex;align-items:flex-start}
  .top label{width:99px;padding:1px 0 0 8px;line-height:16px}
  .sel{flex:1;position:relative}select{appearance:none;display:block;width:100%;height:25px;border:1px solid #a0a0a0;background:#e0e0e0;padding:1px 4px 0;outline:0}
  .sel svg{position:absolute;right:4px;top:8px;fill:none;stroke:#333;pointer-events:none}
  .top mg-button{width:56px;margin:1px 0 0 5px}
  .page{border:1px solid #a6a6a6;border-radius:4px;margin:10px 3px 0 0;height:481px;padding:26px 12px 0;background:linear-gradient(#fff,#fbfbfb 30%,#efefef 90%)}
  fieldset{margin:0;border:1px solid #dcdcdc;padding:0;min-width:0}
  legend{margin-left:7px;padding:0 2px;line-height:17px}
  .advice{display:flex;height:76px;padding:8px 13px 0 15px;justify-content:space-between}
  .advice p{margin:0;width:512px;padding-top:1px}
  .bar{width:19px;height:57px;background:#f0f0f0;display:flex;flex-direction:column;justify-content:space-between;align-items:center;padding:7px 0}
  .bar svg{fill:none;stroke:#aaa;stroke-width:1.500}
  .diag{margin-top:6px;height:340px;padding:0 12px}
  .diag legend{margin-left:-5px}
  .full{display:flex;align-items:center;gap:3px;height:18px;margin-top:10px}
  .rows{margin:15px 0 0 25px}
  .diag mg-button{width:139px;margin:13px 0 0 auto}
  .foot{display:flex;justify-content:flex-end;gap:8px;margin:auto 18px 0 0}
  .foot mg-button{width:73px}.foot mg-button[icon]{width:189px}
  .grip{position:absolute;right:0;bottom:0;stroke:#888;stroke-width:1.500}
  ${box}`,
  `<header><mg-icon name="plus"></mg-icon><h2>Fix Wizard (Part: Format STL 1) &gt; Diagnostics</h2>
    <button aria-label="Minimize"><svg width="14" height="14"><path d="M1 6.500h12"/></svg></button><button aria-label="Maximize" disabled><svg width="14" height="14"><path d="M1.500 1.500h11v11h-11z" style="stroke:#ddd"/></svg></button><button aria-label="Close"><svg width="14" height="14"><path d="M1 1l12 12M13 1L1 13"/></svg></button>
  </header>
  <div class="body">
    <nav><div class="list">
      <mg-nav-item on icon="lens">Diagnostics</mg-nav-item><mg-nav-item icon="combined">Combined Fix</mg-nav-item><hr>
      <mg-nav-item icon="normals">Normals</mg-nav-item><mg-nav-item icon="stitching">Stitching</mg-nav-item><mg-nav-item icon="noise">Noise Shells</mg-nav-item><mg-nav-item icon="holes">Holes</mg-nav-item><mg-nav-item icon="triangles">Triangles</mg-nav-item><mg-nav-item icon="overlaps">Overlaps</mg-nav-item><mg-nav-item icon="shells">Shells</mg-nav-item><hr>
      <mg-nav-item icon="profiles">Profiles</mg-nav-item>
    </div></nav>
    <main>
      <div class="top"><label for="part">Current Part:</label><div class="sel"><select id="part"><option>Format STL 1</option></select><svg width="12" height="8"><path d="M1.500 1.500L6 6l4.500-4.500"/></svg></div><mg-button disabled>Next</mg-button></div>
      <section class="page">
        <fieldset><legend>Advice</legend><div class="advice"><p>No more errors are detected. It seems that the part is ok. Note that not all parameters were analysed.</p><div class="bar"><svg width="12" height="7"><path d="M1 6l5-5 5 5"/></svg><svg width="12" height="7"><path d="M1 1l5 5 5-5"/></svg></div></div></fieldset>
        <fieldset class="diag"><legend>Diagnostics</legend>
          <div class="full"><input type="checkbox" id="full"><label for="full">Full Analysis</label></div>
          <div class="rows">
            <mg-check checked count="0">inverted normals detected</mg-check><mg-check checked count="0">bad edges detected</mg-check><mg-check sub bare count="0">bad contours detected</mg-check><mg-check sub checked count="0">near bad edges detected</mg-check><mg-check sub checked count="0">planar holes detected</mg-check><mg-check checked count="1">shells detected</mg-check><mg-check sub bare count="0">possible noise shells detected</mg-check><mg-check>overlapping triangles detected</mg-check><mg-check>intersecting triangles detected</mg-check>
          </div>
          <mg-button icon="lensgold">Update</mg-button>
        </fieldset>
      </section>
      <div class="foot"><mg-button icon="go">Follow Advice</mg-button><mg-button>Close</mg-button><mg-button>Help</mg-button></div>
    </main>
  </div>
  <svg class="grip" width="15" height="15"><path d="M0 15L15 0M5 15L15 5M10 15l5-5"/></svg>`);

component('mg-app', `:host{display:flex;flex-direction:column;height:100vh;position:relative;background:#fff}.work{flex:1;display:flex;min-height:0}`,
  `<mg-titlebar></mg-titlebar><mg-tabs></mg-tabs><mg-ribbon></mg-ribbon><div class="work"><mg-viewport></mg-viewport><mg-side></mg-side></div><mg-toolbar></mg-toolbar><mg-status></mg-status><mg-fix-wizard></mg-fix-wizard>`);
</script>
</body>
</html>
